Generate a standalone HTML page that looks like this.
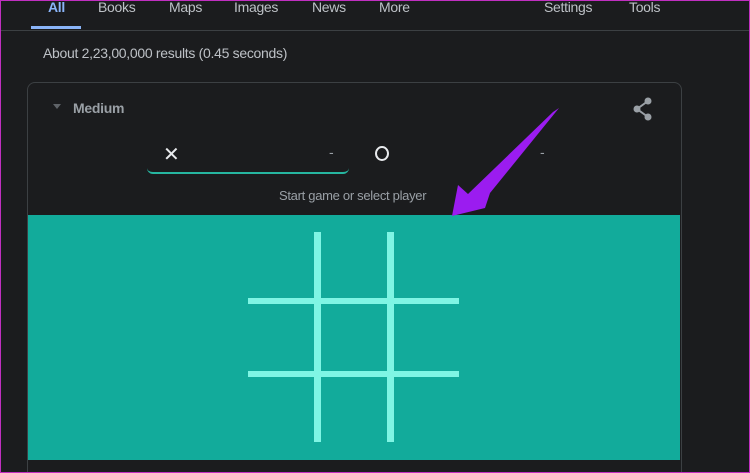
<!DOCTYPE html>
<html style="overflow:hidden;height:473px"><head><style>
body{margin:0;width:750px;height:473px;overflow:hidden;background:#1b1c1e;font-family:"Liberation Sans",Arial,sans-serif;position:relative}
.frame{position:absolute;left:0;top:0;width:750px;height:473px;border:1px solid #c02fc0;box-sizing:border-box;pointer-events:none;z-index:10}
.t{position:absolute;color:#bdc1c6;font-size:14px;letter-spacing:-0.3px}
</style></head><body>
<div class="t" style="left:48px;top:-1px;color:#8ab4f8;font-weight:bold">All</div>
<div style="position:absolute;left:31px;top:26px;width:50px;height:3px;background:#8ab4f8"></div>
<div class="t" style="left:98px;top:-1px">Books</div>
<div class="t" style="left:169px;top:-1px">Maps</div>
<div class="t" style="left:234px;top:-1px">Images</div>
<div class="t" style="left:312px;top:-1px">News</div>
<div class="t" style="left:379px;top:-1px">More</div>
<div class="t" style="left:544px;top:-1px">Settings</div>
<div class="t" style="left:629px;top:-1px">Tools</div>
<div style="position:absolute;left:0;top:30px;width:750px;height:1px;background:#3c4043"></div>
<div class="t" style="left:43px;top:45px">About 2,23,00,000 results (0.45 seconds)</div>
<div style="position:absolute;left:27px;top:82px;width:653px;height:400px;border:1px solid #3c4043;border-radius:8px;background:#1b1c1e"></div>
<div style="position:absolute;left:53px;top:104px;width:0;height:0;border-left:4px solid transparent;border-right:4px solid transparent;border-top:5px solid #5f6368"></div>
<div class="t" style="left:73px;top:100px;font-weight:bold;color:#9aa0a6">Medium</div>
<svg style="position:absolute;left:632px;top:97px" width="22" height="24" viewBox="0 0 22 24"><circle cx="16" cy="4" r="3.5" fill="#9aa0a6"/><circle cx="5" cy="12" r="3.5" fill="#9aa0a6"/><circle cx="16" cy="20" r="3.5" fill="#9aa0a6"/><path d="M16 4L5 12L16 20" stroke="#9aa0a6" stroke-width="2" fill="none"/></svg>
<div style="position:absolute;left:147px;top:136px;width:202px;height:36px;border-bottom:2px solid #26b6a0;border-radius:0 0 6px 6px"></div>
<div class="t" style="left:163px;top:142px;font-size:20px;color:#e8eaed">✕</div>
<div class="t" style="left:329px;top:144px;color:#9aa0a6">-</div>
<div style="position:absolute;left:375px;top:146px;width:10px;height:11px;border:2px solid #e8eaed;border-radius:50%"></div>
<div class="t" style="left:540px;top:144px;color:#9aa0a6">-</div>
<div class="t" style="left:279px;top:188px;font-size:13px;color:#9aa0a6">Start game or select player</div>
<div style="position:absolute;left:28px;top:215px;width:652px;height:245px;background:#12ab9b"></div>
<div style="position:absolute;left:314px;top:232px;width:7px;height:210px;background:#7ff5e4"></div>
<div style="position:absolute;left:387px;top:232px;width:7px;height:210px;background:#7ff5e4"></div>
<div style="position:absolute;left:248px;top:298px;width:211px;height:6px;background:#7ff5e4"></div>
<div style="position:absolute;left:248px;top:371px;width:211px;height:6px;background:#7ff5e4"></div>
<svg style="position:absolute;left:0;top:0;z-index:5" width="750" height="473"><polygon points="559,108 490,193 485,208 452,216 458,185 468,194 553,112" fill="#9b1cf0"/></svg>
<div class="frame"></div>
</body></html>
